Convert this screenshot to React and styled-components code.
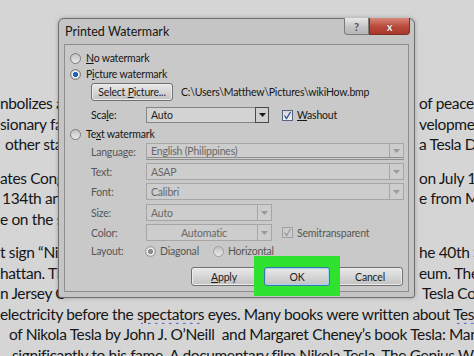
import React from "react";
import styled, { createGlobalStyle } from "styled-components";

const GlobalStyle = createGlobalStyle`
  html, body {
    margin: 0;
    padding: 0;
  }
  body {
    width: 474px;
    height: 356px;
    overflow: hidden;
    background: #d5d5d5;
  }
`;

const Screen = styled.div`
  position: relative;
  width: 474px;
  height: 356px;
  overflow: hidden;
  background: #d5d5d5;
`;

const Page = styled.div`
  padding-top: 93px;
  display: flex;
  flex-direction: column;
  gap: 13px;
  font-family: Lato, "Noto Sans", sans-serif;
  font-size: 15.5px;
  letter-spacing: -0.36px;
  color: #161616;
`;

const Para = styled.div``;

const Line = styled.div`
  display: grid;
  grid-template-columns: 419px 1fr;
  height: 20.5px;
  line-height: 20.5px;
  white-space: nowrap;
  overflow: hidden;
`;

const Frag = styled.span`
  padding-left: ${({ $indent }) => $indent || 0}px;
  overflow: hidden;
`;

const FullFrag = styled.span`
  grid-column: 1 / -1;
  padding-left: ${({ $indent }) => $indent || 0}px;
`;

const Squiggle = styled.span`
  text-decoration: underline wavy #3b4fd0;
  text-decoration-thickness: 1px;
  text-underline-offset: 2px;
`;

const Dialog = styled.div`
  position: absolute;
  left: 58px;
  top: 18px;
  width: 357px;
  height: 280px;
  box-sizing: border-box;
  background: #c5c5c5;
  border: 1px solid #6e6e6e;
  border-radius: 6px 6px 3px 3px;
  box-shadow: 0 0 4px rgba(0, 0, 0, 0.25);
  display: flex;
  flex-direction: column;
  font-family: Lato, "Noto Sans", sans-serif;
  font-size: 10.5px;
  letter-spacing: -0.2px;
  color: #161616;
`;

const TitleBar = styled.div`
  height: 25px;
  display: flex;
  align-items: flex-start;
  padding: 0 4px 0 6px;
`;

const Title = styled.div`
  flex: 1;
  line-height: 26px;
  font-size: 12.5px;
  letter-spacing: 0;
`;

const CapButtons = styled.div`
  display: flex;
  margin-top: -1px;
`;

const CapButton = styled.div`
  width: ${({ $w }) => $w}px;
  height: 17px;
  box-sizing: border-box;
  display: flex;
  align-items: center;
  justify-content: center;
  font-weight: 700;
  font-size: 11px;
  border: 1px solid ${({ $close }) => ($close ? "#7d3027" : "#7a7a7a")};
  border-top: none;
  background: ${({ $close }) =>
    $close
      ? "linear-gradient(#d8887b, #b9493b 55%, #a83a2d)"
      : "linear-gradient(#e8e8e8, #c4c4c4 55%, #b6b6b6)"};
  color: ${({ $close }) => ($close ? "#fbeeee" : "#555")};
  border-radius: ${({ $close }) => ($close ? "0 0 4px 0" : "0 0 0 4px")};
  text-shadow: ${({ $close }) => ($close ? "0 0 2px #6d2219" : "none")};
`;

const Panel = styled.div`
  flex: 1;
  margin: 0 5px 5px 5px;
  border: 1px solid #8d8d8d;
  background: #c9c9c9;
  padding: 5px 4px 0 5px;
  display: flex;
  flex-direction: column;
`;

const Row = styled.div`
  display: flex;
  align-items: center;
  height: ${({ $h }) => $h || 16}px;
  margin-top: ${({ $mt }) => $mt || 0}px;
  padding-left: ${({ $indent }) => $indent || 0}px;
  color: ${({ $dim }) => ($dim ? "#565656" : "inherit")};
`;

const U = styled.span`
  text-decoration: underline;
  text-underline-offset: 1px;
`;

const Radio = styled.span`
  flex: none;
  width: 11px;
  height: 11px;
  box-sizing: border-box;
  border-radius: 50%;
  border: 1px solid ${({ $dim }) => ($dim ? "#9e9e9e" : "#7a7a7a")};
  margin-right: ${({ $gap }) => ($gap === undefined ? 5 : $gap)}px;
  margin-left: ${({ $ml }) => $ml || 0}px;
  background: ${({ $on, $dim }) =>
    $on
      ? `radial-gradient(circle, ${$dim ? "#8d8d8d" : "#2a62b2"} 0 2.3px, #eef1f4 2.8px 3.3px, #cfcfcf 3.8px)`
      : "linear-gradient(#c2c2c2, #e9e9e9)"};
`;

const PushButton = styled.div`
  width: ${({ $w }) => $w || 66}px;
  height: ${({ $h }) => $h || 19}px;
  box-sizing: border-box;
  display: flex;
  align-items: center;
  justify-content: center;
  border-radius: 3px;
  border: 1px solid ${({ $focus }) => ($focus ? "#3a78b4" : "#707070")};
  box-shadow: ${({ $focus }) => ($focus ? "inset 0 0 0 1px #a7d3ef" : "inset 0 0 0 1px #ececec")};
  background: linear-gradient(#e9e9e9, #d6d6d6 50%, #c2c2c2);
  color: #1c1c1c;
`;

const Path = styled.span`
  margin-left: 8px;
`;

const FieldLabel = styled.span`
  width: 55px;
  flex: none;
`;

const Field = styled.div`
  display: flex;
  align-items: stretch;
  height: 100%;
  box-sizing: border-box;
  ${({ $w }) => ($w ? `width: ${$w}px; flex: none;` : "flex: 1;")}
  border: 1px solid ${({ $dim }) => ($dim ? "#a6a6a6" : "#858585")};
  ${({ $double }) => ($double ? "border-bottom: 3px double #8e8e8e;" : "")}
  background: ${({ $dim }) => ($dim ? "#cdcdcd" : "#d3d3d3")};
  color: ${({ $dim }) => ($dim ? "#686868" : "#1c1c1c")};
`;

const FieldText = styled.span`
  flex: 1;
  display: flex;
  align-items: center;
  padding-left: 4px;
  justify-content: ${({ $center }) => ($center ? "center" : "flex-start")};
`;

const ArrowBox = styled.span`
  width: 14px;
  flex: none;
  display: flex;
  align-items: center;
  justify-content: center;
  box-sizing: border-box;
  border-left: 1px solid ${({ $dim }) => ($dim ? "#a6a6a6" : "#5d5d5d")};
  ${({ $dim }) => ($dim ? "" : "border: 1px solid #4a4a4a; margin: -1px -1px -1px 0; background: #cfcfcf;")}
`;

const CheckBox = styled.span`
  flex: none;
  width: 11px;
  height: 11px;
  box-sizing: border-box;
  display: flex;
  align-items: center;
  justify-content: center;
  margin-left: ${({ $ml }) => $ml || 0}px;
  margin-right: 4px;
  border: 1px solid ${({ $dim }) => ($dim ? "#a0a0a0" : "#55647e")};
  background: ${({ $dim }) => ($dim ? "#cdcdcd" : "linear-gradient(#d8d8d8, #f0f0f0)")};
`;

const ButtonRow = styled.div`
  display: flex;
  justify-content: flex-end;
  gap: 7px;
  height: 19px;
  margin-top: 8px;
  margin-right: 1px;
`;

const HighlightWrap = styled.div`
  position: relative;
`;

const Highlight = styled.div`
  position: absolute;
  top: -11px;
  left: -10px;
  right: -10px;
  bottom: -10px;
  background: #2fe22f;
`;

const OnTop = styled.div`
  position: relative;
`;

const Arrow = ({ dim }) => (
  <svg width="7" height="4" viewBox="0 0 7 4">
    <polygon points="0,0 7,0 3.5,4" fill={dim ? "#9a9a9a" : "#1a1a1a"} />
  </svg>
);

const Tick = ({ dim }) => (
  <svg width="9" height="9" viewBox="0 0 9 9">
    <polyline
      points="1.5,4.5 3.5,7.5 7.5,1"
      fill="none"
      stroke={dim ? "#9a9a9a" : "#2a4c9c"}
      strokeWidth="1.3"
    />
  </svg>
);

const lines = [
  [
    { l: "nbolizes a", r: "of peace-" },
    { l: "sionary fa", r: "velopmen" },
    { l: "other sta", li: 5, r: "a Tesla Da", ri: 0 },
  ],
  [
    { l: "ates Cong", r: "on July 10" },
    { l: "134th ann", li: 2, r: "e from M" },
    { l: "e on the s", r: "" },
  ],
  [
    { l: "t sign \u201cNi", r: "he 40th S" },
    { l: "hattan. Th", r: "eum. The" },
    { l: "n Jersey C", r: "Tesla Coi", ri: 3 },
  ],
];

export default function App() {
  return (
    <Screen>
      <GlobalStyle />
      <Page>
        {lines.map((para, i) => (
          <Para key={i}>
            {para.map((ln, j) => (
              <Line key={j}>
                <Frag $indent={ln.li}>{ln.l}</Frag>
                <Frag $indent={ln.ri}>{ln.r}</Frag>
              </Line>
            ))}
            {i === 2 && (
              <>
                <Line>
                  <FullFrag>
                    electricity before the <Squiggle>spectators</Squiggle> eyes. Many books were written about{" "}
                    <Squiggle>Tesla</Squiggle>
                  </FullFrag>
                </Line>
                <Line>
                  <FullFrag $indent={9}>
                    of Nikola Tesla by John J. O’Neill&nbsp; and Margaret Cheney’s book Tesla: Man of
                  </FullFrag>
                </Line>
                <Line>
                  <FullFrag $indent={12}>
                    significantly to his fame. A documentary film Nikola Tesla, The Genius Who
                  </FullFrag>
                </Line>
              </>
            )}
          </Para>
        ))}
      </Page>

      <Dialog>
        <TitleBar>
          <Title>Printed Watermark</Title>
          <CapButtons>
            <CapButton $w={25}>?</CapButton>
            <CapButton $w={41} $close>
              x
            </CapButton>
          </CapButtons>
        </TitleBar>
        <Panel>
          <Row>
            <Radio />
            <span>
              <U>N</U>o watermark
            </span>
          </Row>
          <Row>
            <Radio $on />
            <span>
              P<U>i</U>cture watermark
            </span>
          </Row>
          <Row $h={18} $mt={1} $indent={21}>
            <PushButton $w={82} $h={18}>
              <span>
                Select <U>P</U>icture...
              </span>
            </PushButton>
            <Path>C:\Users\Matthew\Pictures\wikiHow.bmp</Path>
          </Row>
          <Row $mt={6} $indent={21}>
            <FieldLabel>
              Sca<U>l</U>e:
            </FieldLabel>
            <Field $w={123}>
              <FieldText>Auto</FieldText>
              <ArrowBox>
                <Arrow />
              </ArrowBox>
            </Field>
            <CheckBox $ml={13}>
              <Tick />
            </CheckBox>
            <span>
              <U>W</U>ashout
            </span>
          </Row>
          <Row $mt={3}>
            <Radio />
            <span>
              Te<U>x</U>t watermark
            </span>
          </Row>
          <Row $h={17} $mt={1} $indent={21} $dim>
            <FieldLabel>Language:</FieldLabel>
            <Field $dim $double>
              <FieldText>English (Philippines)</FieldText>
              <ArrowBox $dim>
                <Arrow dim />
              </ArrowBox>
            </Field>
          </Row>
          <Row $h={17} $mt={3} $indent={21} $dim>
            <FieldLabel>Text:</FieldLabel>
            <Field $dim>
              <FieldText>ASAP</FieldText>
              <ArrowBox $dim>
                <Arrow dim />
              </ArrowBox>
            </Field>
          </Row>
          <Row $h={17} $mt={3} $indent={21} $dim>
            <FieldLabel>Font:</FieldLabel>
            <Field $dim>
              <FieldText>Calibri</FieldText>
              <ArrowBox $dim>
                <Arrow dim />
              </ArrowBox>
            </Field>
          </Row>
          <Row $h={17} $mt={4} $indent={21} $dim>
            <FieldLabel>Size:</FieldLabel>
            <Field $dim $w={126}>
              <FieldText>Auto</FieldText>
              <ArrowBox $dim>
                <Arrow dim />
              </ArrowBox>
            </Field>
          </Row>
          <Row $h={17} $mt={3} $indent={21} $dim>
            <FieldLabel>Color:</FieldLabel>
            <Field $dim $w={126}>
              <FieldText $center>Automatic</FieldText>
              <ArrowBox $dim>
                <Arrow dim />
              </ArrowBox>
            </Field>
            <CheckBox $dim $ml={10}>
              <Tick dim />
            </CheckBox>
            <span>Semitransparent</span>
          </Row>
          <Row $mt={2} $indent={21} $dim>
            <FieldLabel>Layout:</FieldLabel>
            <Radio $on $dim $gap={4} $ml={-1} />
            <span>Diagonal</span>
            <Radio $dim $gap={4} $ml={14} />
            <span>Horizontal</span>
          </Row>
          <ButtonRow>
            <PushButton>
              <span>
                <U>A</U>pply
              </span>
            </PushButton>
            <HighlightWrap>
              <Highlight />
              <OnTop>
                <PushButton $focus>OK</PushButton>
              </OnTop>
            </HighlightWrap>
            <PushButton>Cancel</PushButton>
          </ButtonRow>
        </Panel>
      </Dialog>
    </Screen>
  );
}
